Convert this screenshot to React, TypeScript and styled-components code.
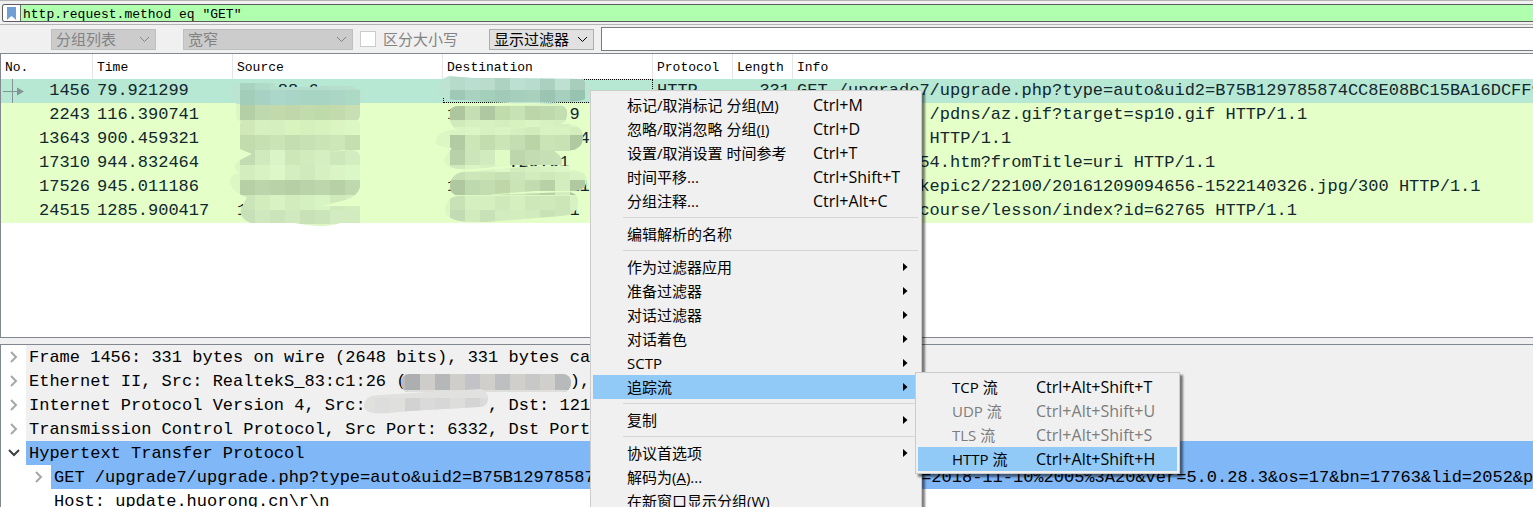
import React from "react";
import styled, { createGlobalStyle, css } from "styled-components";

const uiFont = `"Open Sans", "Noto Sans CJK SC", sans-serif`;
const monoFont = `"Liberation Mono", "Noto Sans CJK SC", monospace`;
const frameColor = "#828790";

const GlobalStyle = createGlobalStyle`
  * { box-sizing: border-box; }
  html, body { margin: 0; overflow: hidden; }
  body { background: #f0f0f0; color: #000; font: 15px/24px ${uiFont}; }
  button, input, select { font: inherit; color: inherit; }
`;

const Window = styled.main`
  position: relative;
  display: grid;
  grid-template-columns: minmax(0, 1fr);
  grid-template-rows: 25px 28px minmax(0, 285fr) 6px minmax(0, 163fr);
  height: 100vh;
  overflow: hidden;
`;

const FilterBar = styled.div`
  display: flex;
  padding: 3px 0 2px 2px;
  border-top: 1px solid #b4b4b4;
  border-bottom: 1px solid #b4b4b4;
`;

const FilterField = styled.div`
  display: flex;
  flex: 1;
  border: 1px solid #5c5c5c;
  border-right: 0;
  border-radius: 3px 0 0 3px;
  background: #afffaf;
  overflow: hidden;
`;

const BookmarkButton = styled.button`
  display: flex;
  align-items: center;
  justify-content: center;
  width: 18px;
  padding: 0;
  border: 0;
  border-right: 1px solid #6a6a6a;
  background: #fff;
`;

const FilterInput = styled.input`
  flex: 1;
  min-width: 0;
  padding: 2px 2px 0;
  border: 0;
  outline: 0;
  background: transparent;
  font: 13px/15px ${monoFont};
`;

const SearchBar = styled.div`
  display: flex;
  align-items: center;
  padding-left: 51px;
`;

const ComboWrap = styled.label<{ $width: number; $gap: number; $disabled?: boolean }>`
  display: grid;
  align-items: center;
  flex: none;
  width: ${(p) => p.$width}px;
  margin-right: ${(p) => p.$gap}px;
  color: ${(p) => (p.$disabled ? "#838383" : "#000")};
  > * { grid-area: 1 / 1; }
  > svg { justify-self: end; margin-right: 6px; pointer-events: none; }
`;

const Combo = styled.select`
  appearance: none;
  width: 100%;
  height: 21px;
  padding: 0 4px;
  border: 1px solid #adadad;
  border-radius: 0;
  background: #e1e1e1;
  line-height: 19px;
  &:disabled {
    border-color: #bfbfbf;
    background: #cccccc;
    color: #838383;
    opacity: 1;
  }
`;

const CaseOption = styled.label`
  display: flex;
  align-items: center;
  gap: 7px;
  width: 129px;
  color: #838383;
  white-space: nowrap;
  input {
    appearance: none;
    width: 16px;
    height: 16px;
    margin: 0;
    border: 1px solid #cccccc;
    background: #fff;
  }
`;

const SearchInput = styled.input`
  flex: 1;
  min-width: 0;
  height: 24px;
  padding: 0 4px;
  border: 1px solid #7a7a7a;
  border-right: 0;
  outline: 0;
  background: #fff;
`;

const Pane = styled.section`
  position: relative;
  border: 1px solid ${frameColor};
  border-right: 0;
  background: #fff;
  overflow: hidden;
`;

const DetailsPane = styled(Pane)`
  border-bottom: 0;
`;

const PacketTable = styled.table`
  width: 100%;
  table-layout: fixed;
  border-collapse: separate;
  border-spacing: 0;
  font: 17px/24px ${monoFont};
  color: #12272e;
  white-space: pre;
`;

const HeadCell = styled.th`
  height: 25px;
  padding: 2px 4px 0;
  border-right: 1px solid #e5e5e5;
  background: #fff;
  color: #000;
  font: 13px/23px ${monoFont};
  text-align: left;
  &:last-child { border-right: 0; }
`;

const PacketRow = styled.tr<{ $selected?: boolean }>`
  background: ${(p) => (p.$selected ? "#b7e8d3" : "#e4ffc7")};
`;

const Cell = styled.td<{ $right?: boolean; $focus?: boolean }>`
  height: 24px;
  padding: 0 3px 0 4px;
  text-align: ${(p) => (p.$right ? "right" : "left")};
  ${(p) => p.$focus && css`outline: 1px dotted #000; outline-offset: -1px;`}
`;

const NumberBox = styled.div`
  display: flex;
  align-items: center;
  justify-content: space-between;
`;

const Smudge = styled.svg`
  position: absolute;
  top: 0;
  left: 0;
  pointer-events: none;
`;

const Tree = styled.ul`
  margin: 0;
  padding: 0;
  list-style: none;
  font: 17px/26px ${monoFont};
  white-space: pre;
`;

const TreeRow = styled.li<{ $level?: number }>`
  display: flex;
  height: 24px;
  padding-left: ${(p) => (p.$level ? 25 : 0)}px;
`;

const TreeToggle = styled.button`
  display: flex;
  flex: none;
  align-items: center;
  justify-content: center;
  width: 25px;
  padding: 0;
  border: 0;
  background: none;
`;

const TreeText = styled.span<{ $tone: "grey" | "blue" | "plain" }>`
  flex: 1;
  min-width: 0;
  padding-left: 3px;
  overflow: hidden;
  background: ${(p) => ({ grey: "#f0f0f0", blue: "#80b7f7", plain: "#fff" })[p.$tone]};
`;

const MenuBox = styled.ul<{ $width: number }>`
  position: absolute;
  width: ${(p) => p.$width}px;
  margin: 0;
  padding: 2px;
  border: 1px solid #cccccc;
  background: #f0f0f0;
  box-shadow: 3px 3px 2px rgba(0, 0, 0, 0.5);
  list-style: none;
`;

const ContextMenu = styled(MenuBox)`
  top: 90px;
  left: 590px;
`;

const SubMenu = styled(MenuBox)`
  top: -3px;
  left: calc(100% - 4px);
`;

const MenuRow = styled.li`
  position: relative;
`;

const MenuButton = styled.button<{ $label: number; $active?: boolean }>`
  display: grid;
  grid-template-columns: ${(p) => p.$label}px 1fr auto;
  align-items: center;
  width: 100%;
  height: 24px;
  padding: 0 11px 0 34px;
  border: 0;
  background: ${(p) => (p.$active ? "#91c9f7" : "transparent")};
  text-align: left;
  white-space: nowrap;
  &:disabled { color: #7c7c7c; }
`;

const Shortcut = styled.span`
  font-size: 16px;
`;

const Separator = styled.li`
  height: 1px;
  margin: 4px 1px 4px 30px;
  background: #d5d5d5;
`;

const ComboArrow = () => (
  <svg width="11" height="7" viewBox="0 0 11 7" fill="none" stroke="currentColor">
    <path d="M1 1l4.5 4.5L10 1" />
  </svg>
);

const SubArrow = () => (
  <svg width="5" height="8" viewBox="0 0 5 8">
    <path d="M0 0v8l4.500-4z" />
  </svg>
);

const TreeArrow = ({ open }: { open?: boolean }) =>
  open ? (
    <svg width="12" height="8" viewBox="0 0 12 8" fill="none" stroke="#404040" strokeWidth="2">
      <path d="M1 1l5 5 5-5" />
    </svg>
  ) : (
    <svg width="8" height="12" viewBox="0 0 8 12" fill="none" stroke="#a6a6a6" strokeWidth="2">
      <path d="M1 1l5 5-5 5" />
    </svg>
  );

const RelatedMark = () => (
  <svg width="22" height="24" viewBox="0 0 22 24" stroke="#849396" fill="#849396" overflow="visible">
    <path d="M7.500 0v24M-2 12.500h14" />
    <path d="M12 8.500l7 4-7 4z" stroke="none" />
  </svg>
);

const columns = [
  { name: "No.", width: 92 },
  { name: "Time", width: 140 },
  { name: "Source", width: 210 },
  { name: "Destination", width: 210 },
  { name: "Protocol", width: 80 },
  { name: "Length", width: 60 },
  { name: "Info" },
];

const packets = [
  { no: "1456", time: "79.921299", src: "    88 6", dst: "", len: "331", info: "GET /upgrade7/upgrade.php?type=auto&uid2=B75B129785874CC8E08BC15BA16DCFF90" },
  { no: "2243", time: "116.390741", src: "1", dst: "1           9", len: "", info: "GET          /pdns/az.gif?target=sp10.gif HTTP/1.1" },
  { no: "13643", time: "900.459321", src: "", dst: "             4", len: "", info: "GET /        HTTP/1.1" },
  { no: "17310", time: "944.832464", src: "", dst: "      .20.01", len: "", info: "GET         54.htm?fromTitle=uri HTTP/1.1" },
  { no: "17526", time: "945.011186", src: "", dst: "1       .27.113", len: "", info: "GET         kepic2/22100/20161209094656-1522140326.jpg/300 HTTP/1.1" },
  { no: "24515", time: "1285.900417", src: "1", dst: "            1", len: "", info: "GET         course/lesson/index?id=62765 HTTP/1.1" },
];

type Band = { y: number; h: number; fill: string[] };

const sourceBands: Band[] = [
  { y: 29, h: 7, fill: ["#a8d3c0", "#afd9c8", "#b5decd", "#b7decd", "#b2dccb", "#b4dccb", "#b6decd", "#badecd"] },
  { y: 36, h: 15, fill: ["#a1cdb9", "#a7d2c3", "#abd6ca", "#a9d5c8", "#a8d4c3", "#a8d4c3", "#abd6c6", "#acd9c4"] },
  { y: 51, h: 15, fill: ["#b4cea5", "#bed9ad", "#c2d9ac", "#bfd7ab", "#c1dbad", "#bfdaa9", "#c3daac", "#c7dfb3"] },
  { y: 66, h: 15, fill: ["#d0e8b8", "#d6f0bf", "#d5efbe", "#d9f3bf", "#d5efbd", "#d7f2bd", "#dbf4c2", "#dcf6c4"] },
  { y: 81, h: 15, fill: ["#c2dcae", "#c6e0b1", "#cbe4b6", "#c5deb0", "#c8e1b4", "#cbe4b6", "#cee7b9", "#c6dfb1"] },
  { y: 96, h: 15, fill: ["#c3dbb0", "#d0eabd", "#daf3c7", "#cde7b9", "#d1ebbd", "#d5efc0", "#cde6ba", "#d3ecc0"] },
  { y: 111, h: 15, fill: ["#d4edbf", "#d9f2c4", "#def7c8", "#d4eec0", "#d1eabd", "#d6f0c1", "#daf4c5", "#dcf7c7"] },
  { y: 126, h: 15, fill: ["#b6cfa5", "#bdd5aa", "#bad2a8", "#b7cfa6", "#bad3a8", "#bdd6ab", "#b7d0a6", "#c0d8ad"] },
  { y: 141, h: 15, fill: ["#cce5b8", "#d2ecbc", "#d9f2c3", "#d3ecbd", "#d5efc0", "#d9f4c3", "#d0e9bb", "#d3edbe"] },
  { y: 156, h: 14, fill: ["#c8e0b7", "#d0e8be", "#cbe4b9", "#d1e9bf", "#c8e1b6", "#cce4ba", "#d2ebc0", "#d2ecc0"] },
];

const destBands: Band[] = [
  { y: 23, h: 13, fill: ["#b7dacb", "#badecf", "#b9dccc", "#aed2c2", "#bee0d2", "#b7ddce", "#acd0c0", "#bee0d2", "#a8cdbc"] },
  { y: 36, h: 12, fill: ["#9fc9b6", "#a9d3c0", "#a4cfbb", "#a1cbb8", "#a5cfbc", "#a7d1bd", "#9bc4b2", "#a6cfbd", "#98c3b1"] },
  { y: 52, h: 14, fill: ["#adc69d", "#c6dfb2", "#b0c8a1", "#c2dbad", "#c7e2b4", "#bcd6aa", "#bfd9ac", "#c3deb0", "#c8e2b5"] },
  { y: 66, h: 9, fill: ["#d1eabb", "#d6f0bf", "#d7f1c0", "#d5eebe", "#d7f1bf", "#daf4c3", "#d7f1c0", "#d5efbf", "#dbf5c4"] },
  { y: 73, h: 8, fill: ["#d9f3c3", "#dbf5c5", "#d7f1c0", "#d9f3c3", "#d6efbf", "#d1ebbb", "#d8f2c2", "#d8f2c2", "#d4edbd"] },
  { y: 81, h: 15, fill: ["#b2cba2", "#cde6b8", "#c4ddaf", "#cce5b7", "#c5deb1", "#bad4a8", "#cbe4b6", "#c9e2b4", "#b0c9a0"] },
  { y: 96, h: 15, fill: ["#b9d1a9", "#cce5b9", "#d2ebbe", "#e0fbc4", "#bdd6ac", "#c3dcb1", "#c6dfb4", "#c8e1b6", "#d1eabf"] },
  { y: 111, h: 7, fill: ["#d1eabd", "#dbf4c4", "#d8f1c2", "#ddf7c6", "#d3ecbe", "#d6f0c1", "#d8f2c3", "#dcf6c7", "#dcf6c7"] },
  { y: 118, h: 8, fill: ["#c7e0b3", "#cee7ba", "#cce5b7", "#c8e1b4", "#cde6b9", "#d3ecbd", "#d0e9bb", "#d4edbf", "#d9f2c3"] },
  { y: 126, h: 15, fill: ["#afc89f", "#bfd9ae", "#c3ddb1", "#bfd6a9", "#cae4b5", "#c2dcb0", "#b8d1a7", "#d3edbf", "#b0c9a1"] },
  { y: 142, h: 14, fill: ["#c9e2b5", "#d6efc0", "#d5efbf", "#cfe9ba", "#d5efbf", "#cee8b9", "#d0e9bb", "#cde6b8", "#d8f1c2"] },
  { y: 156, h: 12, fill: ["#c3dbb2", "#d1ebbd", "#c8e1b6", "#d2ecbf", "#d3edbf", "#d1ebbd", "#c8e2b6", "#cce6ba", "#d3ecbf"] },
];

const Bands = ({ bands, x, clip }: { bands: Band[]; x: number; clip: string }) => (
  <g clipPath={`url(#${clip})`} shapeRendering="crispEdges">
    <rect x={x - 20} y="20" width="180" height="30" fill="#bde3d2" />
    <rect x={x - 20} y="50" width="180" height="125" fill="#dcf6c4" />
    {bands.map((b) =>
      b.fill.map((fill, i) => (
        <rect key={`${b.y}-${i}`} x={x + i * 15} y={b.y} width="15" height={b.h} fill={fill} />
      )),
    )}
  </g>
);

const AddressSmudges = () => (
  <Smudge width="640" height="175" aria-hidden="true">
    <defs>
      <clipPath id="brush-source">
        <path d="M230 38q2-9 12-9h32v4h45v-1h30q14 4 14 10-1 7-8 8H240q-8-4-10-12z" />
        <rect x="235" y="44" width="124" height="24" rx="7" />
        <rect x="239" y="66" width="120" height="16" rx="5" />
        <path d="M239 76h120v20h-17l-18 3 25-3q10 0 10 8v16H239q-10-8 0-14l12-6-12-5z" />
        <path d="M229 127q0-8 15-9l-5-3h120v18q-2 9-15 13l-24 6h39v17h-20q-15 6-45 0h-44q-12-4-10-14l6-12q-15-4-17-16z" />
      </clipPath>
      <clipPath id="brush-dest">
        <path d="M437 37q-1-12 12-15l22 2 110 1q9 6 7 14-2 7-11 8-60 5-112-1-27 1-28-9z" />
        <path d="M448 61q0-9 10-9h42l50-3q18 1 16 12 0 9-11 10l-90 6q-16 0-17-16z" />
        <path d="M435 88q0-10 16-12l55-1 60-5q16 1 16 13 0 12-14 14h-15q11 7 7 14h-48l-30 3q-38 5-39-9l8-11q-16-1-16-6z" />
        <path d="M449 133q0-12 12-15l75-6h33v4q20 1 16 13-1 8-16 8h-35l-40 3q-45 9-45-7z" />
        <path d="M444 157q1-15 15-15l109-4q10 1 9 12-1 11-17 12l-63 5q-50 5-53-10z" />
      </clipPath>
    </defs>
    <Bands bands={sourceBands} x={239} clip="brush-source" />
    <Bands bands={destBands} x={449} clip="brush-dest" />
  </Smudge>
);

const greyTop = ["#bcbcbc", "#adaeaf", "#cfcdca", "#b5b7b9", "#cfcecb", "#c3c3c7", "#d0cfcc", "#bdbfc1", "#d0cfcc", "#c8c8c9", "#d0cfcc", "#b8b9ba"];
const greyLow = ["#e0e0de", "#dddddd", "#dfdfdd", "#d2d2d2", "#dadada", "#d7d7d7", "#dddddb", "#d4d4d4", "#dadada"];

const DetailSmudges = () => (
  <Smudge width="580" height="76" aria-hidden="true">
    <defs>
      <clipPath id="brush-mac"><rect x="400" y="29" width="170" height="18" rx="8" /></clipPath>
      <clipPath id="brush-ip"><path d="M363 61q1-11 15-11l102-6q8 4 7 10-1 8-9 8l-70 4-22 2q-22 2-23-7z" /></clipPath>
    </defs>
    <g clipPath="url(#brush-mac)">
      {greyTop.map((fill, i) => <rect key={i} x={389 + i * 15} y="28" width="16" height="20" fill={fill} />)}
      <rect x="389" y="45" width="182" height="3" fill="#dededc" />
    </g>
    <g clipPath="url(#brush-ip)">
      <rect x="358" y="40" width="136" height="30" fill="#e1e1df" />
      {greyLow.map((fill, i) => <rect key={i} x={359 + i * 15} y="53" width="16" height="20" fill={fill} />)}
    </g>
  </Smudge>
);

type Tone = "grey" | "blue" | "plain";
const tree: { text: string; tone: Tone; level?: number; state?: "open" | "closed" }[] = [
  { text: "Frame 1456: 331 bytes on wire (2648 bits), 331 bytes cap", tone: "grey", state: "closed" },
  { text: "Ethernet II, Src: RealtekS_83:c1:26 (                ),", tone: "grey", state: "closed" },
  { text: "Internet Protocol Version 4, Src:            , Dst: 121", tone: "grey", state: "closed" },
  { text: "Transmission Control Protocol, Src Port: 6332, Dst Port:", tone: "grey", state: "closed" },
  { text: "Hypertext Transfer Protocol", tone: "blue", state: "open" },
  { text: "GET /upgrade7/upgrade.php?type=auto&uid2=B75B129785874CC8E08BC15BA16DCFF90&updatetime=2018-11-10%2005%3A20&ver=5.0.28.3&os=17&bn=17763&lid=2052&pt", tone: "blue", level: 1, state: "closed" },
  { text: "Host: update.huorong.cn\\r\\n", tone: "plain", level: 1 },
];

type Item = {
  label: React.ReactNode;
  keys?: string;
  disabled?: boolean;
  active?: boolean;
  sub?: boolean;
  children?: Item[];
} | null;

const menu: Item[] = [
  { label: <>标记/取消标记 分组(<u>M</u>)</>, keys: "Ctrl+M" },
  { label: <>忽略/取消忽略 分组(<u>I</u>)</>, keys: "Ctrl+D" },
  { label: "设置/取消设置 时间参考", keys: "Ctrl+T" },
  { label: "时间平移...", keys: "Ctrl+Shift+T" },
  { label: "分组注释...", keys: "Ctrl+Alt+C" },
  null,
  { label: "编辑解析的名称" },
  null,
  { label: "作为过滤器应用", sub: true },
  { label: "准备过滤器", sub: true },
  { label: "对话过滤器", sub: true },
  { label: "对话着色", sub: true },
  { label: "SCTP", sub: true },
  {
    label: "追踪流",
    sub: true,
    active: true,
    children: [
      { label: "TCP 流", keys: "Ctrl+Alt+Shift+T" },
      { label: "UDP 流", keys: "Ctrl+Alt+Shift+U", disabled: true },
      { label: "TLS 流", keys: "Ctrl+Alt+Shift+S", disabled: true },
      { label: "HTTP 流", keys: "Ctrl+Alt+Shift+H", active: true },
    ],
  },
  null,
  { label: "复制", sub: true },
  null,
  { label: "协议首选项", sub: true },
  { label: <>解码为(<u>A</u>)...</> },
  { label: <>在新窗口显示分组(<u>W</u>)</> },
];

const MenuItems = ({ items, label }: { items: Item[]; label: number }) => (
  <>
    {items.map((item, i) =>
      item === null ? (
        <Separator key={i} role="separator" />
      ) : (
        <MenuRow key={i} role="none">
          <MenuButton role="menuitem" $label={label} $active={item.active} disabled={item.disabled}>
            <span>{item.label}</span>
            <Shortcut>{item.keys}</Shortcut>
            {item.sub && <SubArrow />}
          </MenuButton>
          {item.children && (
            <SubMenu role="menu" $width={265}>
              <MenuItems items={item.children} label={84} />
            </SubMenu>
          )}
        </MenuRow>
      ),
    )}
  </>
);

export default function App() {
  return (
    <>
      <GlobalStyle />
      <Window>
        <FilterBar>
          <FilterField>
            <BookmarkButton aria-label="Bookmark">
              <svg width="9" height="13" viewBox="0 0 9 13" fill="#6f9fd4">
                <path d="M0 0h9v13l-2-2-2.500-2L2 11l-2 2z" />
              </svg>
            </BookmarkButton>
            <FilterInput aria-label="Display filter" defaultValue={'http.request.method eq "GET"'} spellCheck={false} />
          </FilterField>
        </FilterBar>

        <SearchBar>
          <ComboWrap $width={105} $gap={27} $disabled>
            <Combo aria-label="Search in" disabled><option>分组列表</option></Combo>
            <ComboArrow />
          </ComboWrap>
          <ComboWrap $width={170} $gap={7} $disabled>
            <Combo aria-label="Character width" disabled><option>宽窄</option></Combo>
            <ComboArrow />
          </ComboWrap>
          <CaseOption>
            <input type="checkbox" disabled />
            区分大小写
          </CaseOption>
          <ComboWrap $width={105} $gap={7}>
            <Combo aria-label="Search type"><option>显示过滤器</option></Combo>
            <ComboArrow />
          </ComboWrap>
          <SearchInput aria-label="Search" />
        </SearchBar>

        <Pane>
          <PacketTable>
            <colgroup>
              {columns.map((c) => <col key={c.name} width={c.width} />)}
            </colgroup>
            <thead>
              <tr>{columns.map((c) => <HeadCell key={c.name}>{c.name}</HeadCell>)}</tr>
            </thead>
            <tbody>
              {packets.map((p, i) => (
                <PacketRow key={p.no} $selected={i === 0}>
                  {i === 0 ? (
                    <Cell $right><NumberBox><RelatedMark /><span>{p.no}</span></NumberBox></Cell>
                  ) : (
                    <Cell $right>{p.no}</Cell>
                  )}
                  <Cell>{p.time}</Cell>
                  <Cell>{p.src}</Cell>
                  <Cell $focus={i === 0}>{p.dst}</Cell>
                  <Cell>{i === 0 ? "HTTP" : ""}</Cell>
                  <Cell $right>{p.len}</Cell>
                  <Cell>{p.info}</Cell>
                </PacketRow>
              ))}
            </tbody>
          </PacketTable>
          <AddressSmudges />
        </Pane>

        <div />

        <DetailsPane>
          <Tree>
            {tree.map((r) => (
              <TreeRow key={r.text} $level={r.level}>
                {r.state ? (
                  <TreeToggle aria-label={r.state === "open" ? "Collapse" : "Expand"}>
                    <TreeArrow open={r.state === "open"} />
                  </TreeToggle>
                ) : (
                  <TreeToggle as="span" />
                )}
                <TreeText $tone={r.tone}>{r.text}</TreeText>
              </TreeRow>
            ))}
          </Tree>
          <DetailSmudges />
        </DetailsPane>

        <ContextMenu role="menu" $width={332}>
          <MenuItems items={menu} label={186} />
        </ContextMenu>
      </Window>
    </>
  );
}
